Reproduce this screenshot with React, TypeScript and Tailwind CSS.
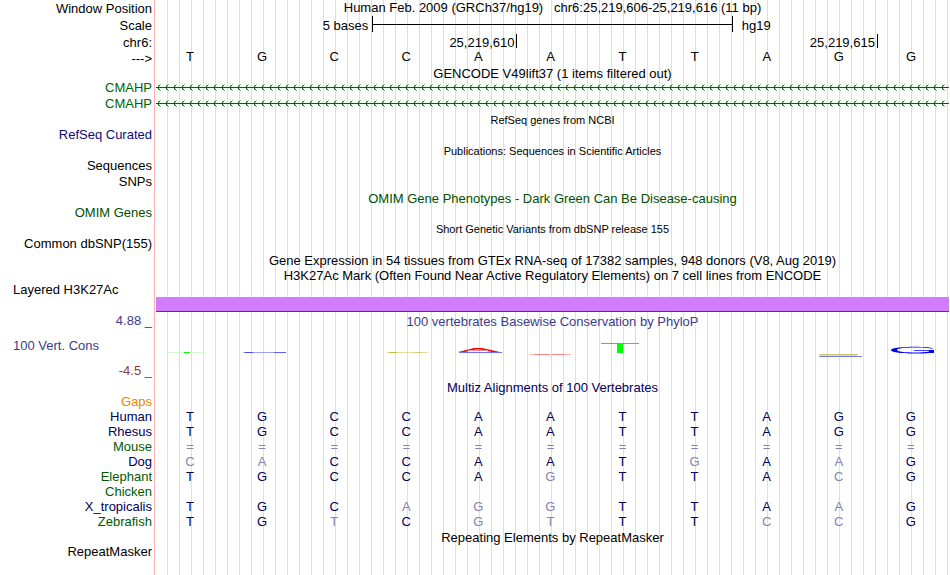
import type { ReactNode } from "react";

const BASES = "TGCCAATTAGG".split("");

type Species = { name: string; color: string; bases: string; dim: string };

// "x" in `dim` marks a base that differs from the human sequence.
const SPECIES: Species[] = [
  { name: "Gaps", color: "text-[#e68a00]", bases: "", dim: "" },
  { name: "Human", color: "text-[#00005c]", bases: "TGCCAATTAGG", dim: "" },
  { name: "Rhesus", color: "text-[#00005c]", bases: "TGCCAATTAGG", dim: "" },
  { name: "Mouse", color: "text-[#005a00]", bases: "===========", dim: "xxxxxxxxxxx" },
  { name: "Dog", color: "text-[#00005c]", bases: "CACCAATGAAG", dim: "xx.....x.x." },
  { name: "Elephant", color: "text-[#005a00]", bases: "TGCCAGTTACG", dim: ".....x...x." },
  { name: "Chicken", color: "text-[#005a00]", bases: "", dim: "" },
  { name: "X_tropicalis", color: "text-[#00005c]", bases: "TGCAGGTTAAG", dim: "...xxx...x." },
  { name: "Zebrafish", color: "text-[#005a00]", bases: "TGTCGTTTCCG", dim: "..x.xx..xx." },
];

const LABEL = "w-[155px] shrink-0 border-r border-[#ffb0b0] bg-white pr-0.5 text-right";

function Row({
  label,
  height = "h-4",
  color = "text-black",
  left = false,
  children,
}: {
  label?: string;
  height?: string;
  color?: string;
  left?: boolean;
  children?: ReactNode;
}) {
  return (
    <div className={`flex ${height}`}>
      <div className={`${LABEL} ${color} ${left ? "pl-[13px] text-left!" : ""}`}>{label}</div>
      <div className="min-w-0 flex-1 border-l border-white">{children}</div>
    </div>
  );
}

function Title({
  text,
  color = "text-black",
  small = false,
  height = "h-[15px] leading-[17px]",
}: {
  text: string;
  color?: string;
  small?: boolean;
  height?: string;
}) {
  return (
    <Row height={height}>
      <h2 className={`whitespace-pre text-center ${color} ${small ? "text-[11px]/[17px]" : ""}`}>{text}</h2>
    </Row>
  );
}

function GeneArrows({ id }: { id: string }) {
  return (
    <svg className="block h-4 w-full" aria-hidden="true">
      <defs>
        <pattern id={id} width="8" height="16" patternUnits="userSpaceOnUse">
          <path d="M1 7h1v1h-1zM2 6h1v1h-1zM2 8h1v1h-1zM3 5h1v1h-1zM3 9h1v1h-1z" fill="#006400" />
          <path d="M4 4h1v1h-1zM4 10h1v1h-1zM2 5h1v1h-1zM2 9h1v1h-1z" fill="#006400" fillOpacity="0.4" />
        </pattern>
      </defs>
      <rect width="100%" height="16" fill={`url(#${id})`} />
      <rect y="7" width="100%" height="1" fill="#006400" />
    </svg>
  );
}

function ConservationLogo() {
  return (
    <svg className="block h-[50px] w-full" viewBox="0 0 793 50" preserveAspectRatio="none" aria-hidden="true">
      <rect x="12" y="22" width="38" height="1" fill="#d2fad2" />
      <rect x="28" y="22" width="6" height="1" fill="#00ff00" />
      <rect x="87" y="22" width="43" height="1" fill="#a0a0ff" />
      <rect x="89" y="22" width="8" height="1" fill="#4a4aff" />
      <rect x="118" y="22" width="12" height="1" fill="#6060ff" />
      <rect x="231" y="22" width="41" height="1" fill="#e0e0a0" />
      <rect x="233" y="22" width="8" height="1" fill="#bcbc40" />
      <rect x="258" y="22" width="8" height="1" fill="#d0d070" />
      <rect x="303" y="22" width="43" height="1" fill="#7070ff" />
      <path d="M302 22 L318 18 H326 L344 22 H336 L324 19.4 H320 L309 22 Z" fill="#ff0000" />
      <rect x="312" y="20" width="20" height="1" fill="#ff9090" />
      <rect x="374" y="24" width="41" height="1" fill="#ffb0b0" />
      <rect x="379" y="24" width="14" height="1" fill="#ff8080" />
      <rect x="397" y="24" width="12" height="1" fill="#ff8080" />
      <rect x="445" y="13" width="38" height="1" fill="#00ff00" />
      <rect x="461" y="13" width="6" height="10" fill="#00ff00" />
      <rect x="663" y="24" width="39" height="1" fill="#cccc66" />
      <rect x="665" y="25" width="36" height="1" fill="#ffc0c0" />
      <rect x="663" y="26" width="43" height="1" fill="#7878ff" />
      <path
        d="M735 20 C735 16 778 16 777 19 C768 17 741 17 741 20 C741 23 768 23 773 21.5 V20.7 H758 V20 H778 V23 H773 C764 24 735 24 735 20 Z"
        fill="#0000ff"
      />
    </svg>
  );
}

export default function App() {
  return (
    <div className="min-h-screen bg-white pr-px font-['Liberation_Sans',Arial,sans-serif] text-[13px] leading-[15px] text-black">
      <main className="flex min-h-screen flex-col bg-[repeating-linear-gradient(to_right,transparent_0px,transparent_11px,#dcdcf8_11px,#dcdcf8_12px)]">
        <Row label="Window Position" height="h-4 leading-[17px]">
          <h1 className="whitespace-pre text-center leading-[15px]">
            {"Human Feb. 2009 (GRCh37/hg19)   chr6:25,219,606-25,219,616 (11 bp)"}
          </h1>
        </Row>
        <Row label="Scale" height="h-[17px] leading-[19px]">
          <div className="grid h-full grid-cols-11">
            <div className="col-span-3 pr-1 text-right">5 bases</div>
            <div className="col-span-5 flex h-4 items-center border-x border-black">
              <div className="h-px w-full bg-black" />
            </div>
            <div className="col-span-3 pl-[9px]">hg19</div>
          </div>
        </Row>
        <Row label="chr6:" height="h-[17px] leading-[19px]">
          <div className="grid h-full grid-cols-11 pt-px leading-[17px]">
            <div className="col-span-5 pr-0.5 text-right">25,219,610</div>
            <div className="col-span-5 h-[14px] border-l border-black pr-0.5 text-right">25,219,615</div>
            <div className="h-[14px] border-l border-black" />
          </div>
        </Row>
        <Row label="--->" height="h-[15px] leading-[17px]">
          <div className="grid grid-cols-11 text-center leading-[13px]">
            {BASES.map((b, i) => (
              <span key={i} className="pr-1">
                {b}
              </span>
            ))}
          </div>
        </Row>
        <Title text="GENCODE V49lift37 (1 items filtered out)" />
        <Row label="CMAHP" color="text-[#006400]">
          <GeneArrows id="arrows-a" />
        </Row>
        <Row label="CMAHP" color="text-[#006400]">
          <GeneArrows id="arrows-b" />
        </Row>
        <Title text="RefSeq genes from NCBI" small />
        <Row label="RefSeq Curated" color="text-[#0c0c78]" />
        <Title text="Publications: Sequences in Scientific Articles" small />
        <Row label="Sequences" />
        <Row label="SNPs" />
        <Title text="OMIM Gene Phenotypes - Dark Green Can Be Disease-causing" color="text-[#005000]" />
        <Row label="OMIM Genes" color="text-[#005000]" />
        <Title text="Short Genetic Variants from dbSNP release 155" small />
        <Row label="Common dbSNP(155)" />
        <Title text="Gene Expression in 54 tissues from GTEx RNA-seq of 17382 samples, 948 donors (V8, Aug 2019)" />
        <Title text="H3K27Ac Mark (Often Found Near Active Regulatory Elements) on 7 cell lines from ENCODE" />
        <Row label="Layered H3K27Ac" height="h-[15px]" left />
        <Row height="h-[15px]">
          <div className="h-full border-b border-[#6a2a80] bg-[#d27dff]" />
        </Row>
        <section className="flex h-[68px]">
          <div className={`${LABEL} flex flex-col gap-2 leading-[17px]`}>
            <div className="text-[#3c3c8c]">4.88 _</div>
            <div className="pl-[13px] text-left text-[#3c3c8c]">100 Vert. Cons</div>
            <div className="text-[#8c3c3c]">-4.5 _</div>
          </div>
          <div className="min-w-0 flex-1 border-l border-white">
            <h2 className="h-[18px] text-center leading-[19px] text-[#3c3c8c]">
              100 vertebrates Basewise Conservation by PhyloP
            </h2>
            <ConservationLogo />
          </div>
        </section>
        <Title
          text="Multiz Alignments of 100 Vertebrates"
          color="text-[#00005c]"
          height="h-[14px] leading-[15px]"
        />
        <table className="w-full table-fixed border-separate border-spacing-0">
          <colgroup>
            <col className="w-[156px]" />
            {BASES.map((_, i) => (
              <col key={i} />
            ))}
          </colgroup>
          <tbody>
            {SPECIES.map((s) => (
              <tr key={s.name} className="h-[15px]">
                <th scope="row" className={`bg-white p-0 font-normal ${s.color}`}>
                  <div className={LABEL}>{s.name}</div>
                </th>
                {BASES.map((_, i) => (
                  <td
                    key={i}
                    className={`py-0 pl-0 pr-1 text-center ${s.dim[i] === "x" ? "text-[#8282b4]" : "text-[#00005c]"}`}
                  >
                    {s.bases[i]}
                  </td>
                ))}
              </tr>
            ))}
          </tbody>
        </table>
        <Title text="Repeating Elements by RepeatMasker" />
        <Row label="RepeatMasker" height="grow" />
      </main>
    </div>
  );
}
